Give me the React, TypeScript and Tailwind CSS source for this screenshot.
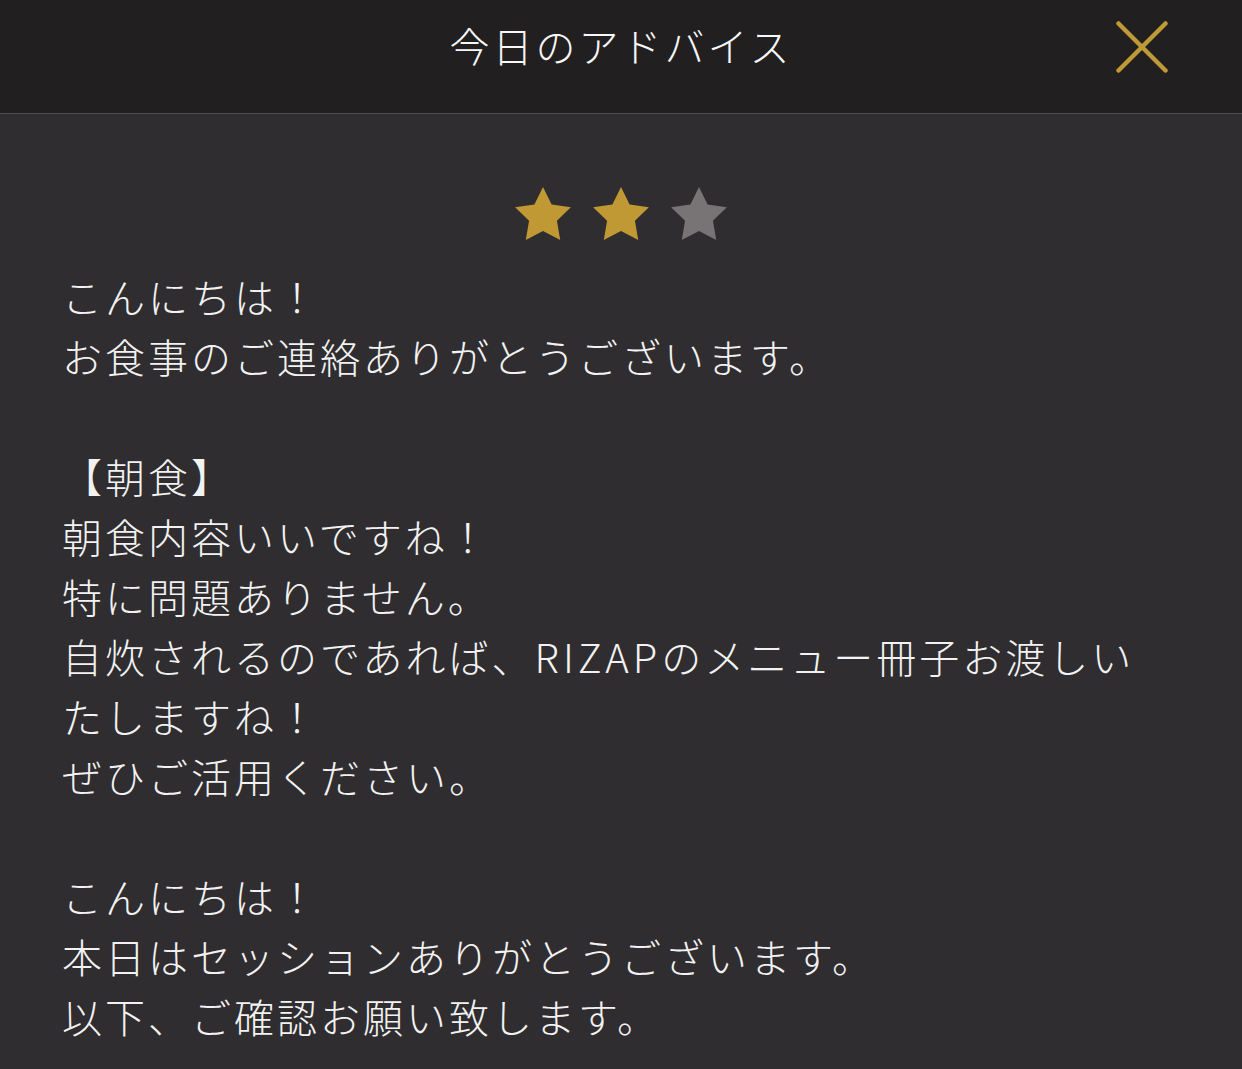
const LINES = [
  'こんにちは！',
  'お食事のご連絡ありがとうございます。',
  '',
  '【朝食】',
  '朝食内容いいですね！',
  '特に問題ありません。',
  '自炊されるのであれば、RIZAPのメニュー冊子お渡しい',
  'たしますね！',
  'ぜひご活用ください。',
  '',
  'こんにちは！',
  '本日はセッションありがとうございます。',
  '以下、ご確認お願い致します。',
]

function Star({ filled }: { filled: boolean }) {
  return (
    <svg width="56" height="53" viewBox="2 2 20 19.02" className={filled ? 'text-[#c09935]' : 'text-[#787374]'}>
      <path
        fill="currentColor"
        d="M12 2l3.09 6.26L22 9.27l-5 4.87 1.18 6.88L12 17.77l-6.18 3.25L7 14.14 2 9.27l6.91-1.01L12 2z"
      />
    </svg>
  )
}

export default function App() {
  const rating = 2

  return (
    <div className="min-h-screen bg-[#2f2d2f] text-[#f2f2f2] font-['Noto_Sans_CJK_JP',sans-serif] overflow-hidden">
      {/* Header */}
      <header className="h-[114px] bg-[#211f20] border-b border-[#4d4b4c] grid grid-cols-[1fr_auto_1fr] items-center pb-[19px]">
        <div />
        <h1 className="text-[40px] leading-[60px] tracking-[3px] font-light text-[#f7f7f7] -mt-[5px]">今日のアドバイス</h1>
        <div className="flex justify-end pr-[74px]">
          <button className="w-[52px] h-[52px]">
            <svg width="52" height="52" viewBox="0 0 52 52" fill="none" stroke="#bf9a35" strokeWidth="4.5" strokeLinecap="round">
              <line x1="2.5" y1="2.5" x2="49.5" y2="49.5" />
              <line x1="49.5" y1="2.5" x2="2.5" y2="49.5" />
            </svg>
          </button>
        </div>
      </header>

      <main className="pt-[73px] px-[62px]">
        {/* Rating */}
        <div className="flex justify-center gap-[22px]">
          {[0, 1, 2].map(i => (
            <Star key={i} filled={i < rating} />
          ))}
        </div>

        {/* Advice text */}
        <div className="mt-[26px] text-[40px] leading-[60px] tracking-[3px] font-light whitespace-nowrap">
          {LINES.map((line, i) => (
            <div key={i} className="h-[60px]">
              {line.includes('RIZAP') ? (
                <>
                  {line.split('RIZAP')[0]}
                  <span className="tracking-[4px]">RIZAP</span>
                  {line.split('RIZAP')[1]}
                </>
              ) : (
                line
              )}
            </div>
          ))}
        </div>
      </main>
    </div>
  )
}
